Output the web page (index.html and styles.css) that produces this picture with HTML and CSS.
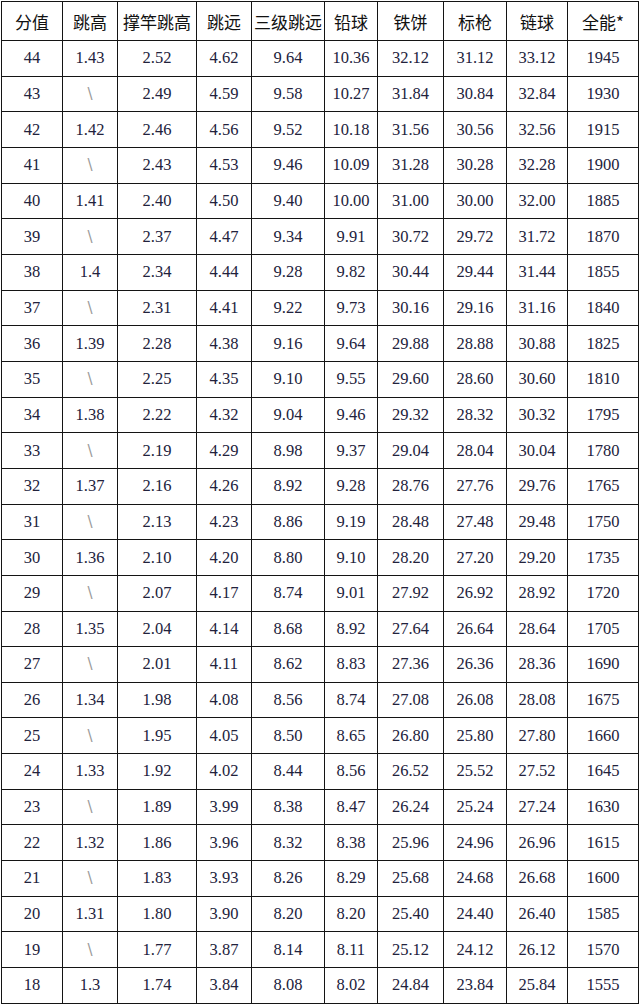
FILE: index.html
```html
<!DOCTYPE html>
<html lang="zh">
<head>
<meta charset="utf-8">
<title>分值表</title>
<link rel="stylesheet" href="styles.css">
</head>
<body>
<table class="score">
<colgroup>
<col class="c1"><col class="c2"><col class="c3"><col class="c4"><col class="c5"><col class="c6"><col class="c7"><col class="c8"><col class="c9"><col class="c10">
</colgroup>
<thead>
<tr><th>分值</th><th>跳高</th><th>撑竿跳高</th><th>跳远</th><th>三级跳远</th><th>铅球</th><th>铁饼</th><th>标枪</th><th>链球</th><th>全能*</th></tr>
</thead>
<tbody>
<tr><td>44</td><td>1.43</td><td>2.52</td><td>4.62</td><td>9.64</td><td>10.36</td><td>32.12</td><td>31.12</td><td>33.12</td><td>1945</td></tr>
<tr><td>43</td><td class="na">\</td><td>2.49</td><td>4.59</td><td>9.58</td><td>10.27</td><td>31.84</td><td>30.84</td><td>32.84</td><td>1930</td></tr>
<tr><td>42</td><td>1.42</td><td>2.46</td><td>4.56</td><td>9.52</td><td>10.18</td><td>31.56</td><td>30.56</td><td>32.56</td><td>1915</td></tr>
<tr><td>41</td><td class="na">\</td><td>2.43</td><td>4.53</td><td>9.46</td><td>10.09</td><td>31.28</td><td>30.28</td><td>32.28</td><td>1900</td></tr>
<tr><td>40</td><td>1.41</td><td>2.40</td><td>4.50</td><td>9.40</td><td>10.00</td><td>31.00</td><td>30.00</td><td>32.00</td><td>1885</td></tr>
<tr><td>39</td><td class="na">\</td><td>2.37</td><td>4.47</td><td>9.34</td><td>9.91</td><td>30.72</td><td>29.72</td><td>31.72</td><td>1870</td></tr>
<tr><td>38</td><td>1.4</td><td>2.34</td><td>4.44</td><td>9.28</td><td>9.82</td><td>30.44</td><td>29.44</td><td>31.44</td><td>1855</td></tr>
<tr><td>37</td><td class="na">\</td><td>2.31</td><td>4.41</td><td>9.22</td><td>9.73</td><td>30.16</td><td>29.16</td><td>31.16</td><td>1840</td></tr>
<tr><td>36</td><td>1.39</td><td>2.28</td><td>4.38</td><td>9.16</td><td>9.64</td><td>29.88</td><td>28.88</td><td>30.88</td><td>1825</td></tr>
<tr><td>35</td><td class="na">\</td><td>2.25</td><td>4.35</td><td>9.10</td><td>9.55</td><td>29.60</td><td>28.60</td><td>30.60</td><td>1810</td></tr>
<tr><td>34</td><td>1.38</td><td>2.22</td><td>4.32</td><td>9.04</td><td>9.46</td><td>29.32</td><td>28.32</td><td>30.32</td><td>1795</td></tr>
<tr><td>33</td><td class="na">\</td><td>2.19</td><td>4.29</td><td>8.98</td><td>9.37</td><td>29.04</td><td>28.04</td><td>30.04</td><td>1780</td></tr>
<tr><td>32</td><td>1.37</td><td>2.16</td><td>4.26</td><td>8.92</td><td>9.28</td><td>28.76</td><td>27.76</td><td>29.76</td><td>1765</td></tr>
<tr><td>31</td><td class="na">\</td><td>2.13</td><td>4.23</td><td>8.86</td><td>9.19</td><td>28.48</td><td>27.48</td><td>29.48</td><td>1750</td></tr>
<tr><td>30</td><td>1.36</td><td>2.10</td><td>4.20</td><td>8.80</td><td>9.10</td><td>28.20</td><td>27.20</td><td>29.20</td><td>1735</td></tr>
<tr><td>29</td><td class="na">\</td><td>2.07</td><td>4.17</td><td>8.74</td><td>9.01</td><td>27.92</td><td>26.92</td><td>28.92</td><td>1720</td></tr>
<tr><td>28</td><td>1.35</td><td>2.04</td><td>4.14</td><td>8.68</td><td>8.92</td><td>27.64</td><td>26.64</td><td>28.64</td><td>1705</td></tr>
<tr><td>27</td><td class="na">\</td><td>2.01</td><td>4.11</td><td>8.62</td><td>8.83</td><td>27.36</td><td>26.36</td><td>28.36</td><td>1690</td></tr>
<tr><td>26</td><td>1.34</td><td>1.98</td><td>4.08</td><td>8.56</td><td>8.74</td><td>27.08</td><td>26.08</td><td>28.08</td><td>1675</td></tr>
<tr><td>25</td><td class="na">\</td><td>1.95</td><td>4.05</td><td>8.50</td><td>8.65</td><td>26.80</td><td>25.80</td><td>27.80</td><td>1660</td></tr>
<tr><td>24</td><td>1.33</td><td>1.92</td><td>4.02</td><td>8.44</td><td>8.56</td><td>26.52</td><td>25.52</td><td>27.52</td><td>1645</td></tr>
<tr><td>23</td><td class="na">\</td><td>1.89</td><td>3.99</td><td>8.38</td><td>8.47</td><td>26.24</td><td>25.24</td><td>27.24</td><td>1630</td></tr>
<tr><td>22</td><td>1.32</td><td>1.86</td><td>3.96</td><td>8.32</td><td>8.38</td><td>25.96</td><td>24.96</td><td>26.96</td><td>1615</td></tr>
<tr><td>21</td><td class="na">\</td><td>1.83</td><td>3.93</td><td>8.26</td><td>8.29</td><td>25.68</td><td>24.68</td><td>26.68</td><td>1600</td></tr>
<tr><td>20</td><td>1.31</td><td>1.80</td><td>3.90</td><td>8.20</td><td>8.20</td><td>25.40</td><td>24.40</td><td>26.40</td><td>1585</td></tr>
<tr><td>19</td><td class="na">\</td><td>1.77</td><td>3.87</td><td>8.14</td><td>8.11</td><td>25.12</td><td>24.12</td><td>26.12</td><td>1570</td></tr>
<tr><td>18</td><td>1.3</td><td>1.74</td><td>3.84</td><td>8.08</td><td>8.02</td><td>24.84</td><td>23.84</td><td>25.84</td><td>1555</td></tr>
</tbody>
</table>
</body>
</html>
```
FILE: styles.css
```css
html, body {
  margin: 0;
  padding: 0;
  background: #ffffff;
}

.score {
  margin: 1px 0 0 1px;
  width: 637px;
  border-collapse: collapse;
  table-layout: fixed;
}

.c1 { width: 61px; }
.c2 { width: 55px; }
.c3 { width: 79px; }
.c4 { width: 55px; }
.c5 { width: 73px; }
.c6 { width: 53px; }
.c7 { width: 66px; }
.c8 { width: 63px; }
.c9 { width: 61px; }
.c10 { width: 71px; }

.score th,
.score td {
  border: 1px solid #141414;
  padding: 0;
  text-align: center;
  vertical-align: middle;
  white-space: nowrap;
  overflow: hidden;
}

.score th {
  height: 38px;
  font-family: "Noto Sans CJK SC", "Noto Sans", sans-serif;
  font-weight: normal;
  font-size: 17px;
  color: #111111;
}

.score td {
  height: 34.67px;
  font-family: "Liberation Serif", "Times New Roman", serif;
  font-size: 16.5px;
  color: #22223c;
}

.score td.na {
  font-family: "DejaVu Sans", sans-serif;
  color: #9a9a9a;
  font-size: 15px;
}
```
